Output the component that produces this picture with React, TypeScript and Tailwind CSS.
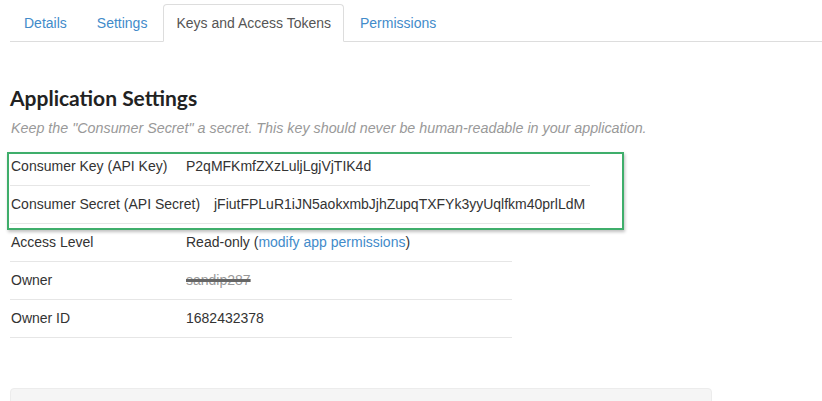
const TABS = ["Details", "Settings", "Keys and Access Tokens", "Permissions"];
const ACTIVE_TAB = "Keys and Access Tokens";

type Row = { label: string; value: React.ReactNode; labelWidth?: string };

function SettingRow({ label, value, labelWidth }: Row) {
  return (
    <div className="flex h-[38px] items-center border-b border-[#e6e6e6] pl-px">
      <div className={labelWidth ?? "w-[175px]"}>{label}</div>
      <div>{value}</div>
    </div>
  );
}

export default function App() {
  return (
    <div className="relative h-[401px] w-[822px] overflow-hidden bg-white pl-[10px] font-['Liberation_Sans',Arial,sans-serif] text-[14px] text-[#333]">
      <ul className="mt-[4px] flex border-b border-[#ddd]">
        {TABS.map((tab) => (
          <li key={tab} className="-mb-px mr-[2px]">
            {tab === ACTIVE_TAB ? (
              <span className="block rounded-t-[4px] border border-[#ddd] border-b-white bg-white px-[12px] py-[8px] leading-[20px] text-[#555]">
                {tab}
              </span>
            ) : (
              <a className="block border border-transparent px-[13px] py-[8px] leading-[20px] text-[#428bca]" href="#">
                {tab}
              </a>
            )}
          </li>
        ))}
      </ul>

      <h2 className="mt-[44px] font-['Lato',sans-serif] text-[21px] font-bold leading-[24px] text-[#222]">
        Application Settings
      </h2>
      <p className="mt-[9px] pl-px text-[14.3px] italic leading-[18px] text-[#999]">
        Keep the &quot;Consumer Secret&quot; a secret. This key should never be human-readable in your application.
      </p>

      <div className="mt-[11px] w-[580px]">
        <SettingRow label="Consumer Key (API Key)" value="P2qMFKmfZXzLuljLgjVjTIK4d" />
        <SettingRow
          label="Consumer Secret (API Secret)"
          labelWidth="w-[203px]"
          value="jFiutFPLuR1iJN5aokxmbJjhZupqTXFYk3yyUqlfkm40prlLdM"
        />
      </div>

      <div className="w-[502px]">
        <SettingRow
          label="Access Level"
          value={
            <>
              Read-only (
              <a className="text-[#428bca]" href="#">
                modify app permissions
              </a>
              )
            </>
          }
        />
        <SettingRow
          label="Owner"
          value={
            <span className="text-[#999] line-through decoration-[#666] decoration-[2.5px]">sandip287</span>
          }
        />
        <SettingRow label="Owner ID" value="1682432378" />
      </div>

      <div className="mt-[50px] h-[40px] w-[702px] rounded-[4px] border border-[#ececec] bg-[#f5f5f5]" />

      {/* highlight annotation around the consumer keys */}
      <div className="pointer-events-none absolute left-[7px] top-[152px] h-[78px] w-[617px] border-2 border-[#3fae6b] shadow-[1px_2px_3px_rgba(0,0,0,0.25)]" />
    </div>
  );
}
